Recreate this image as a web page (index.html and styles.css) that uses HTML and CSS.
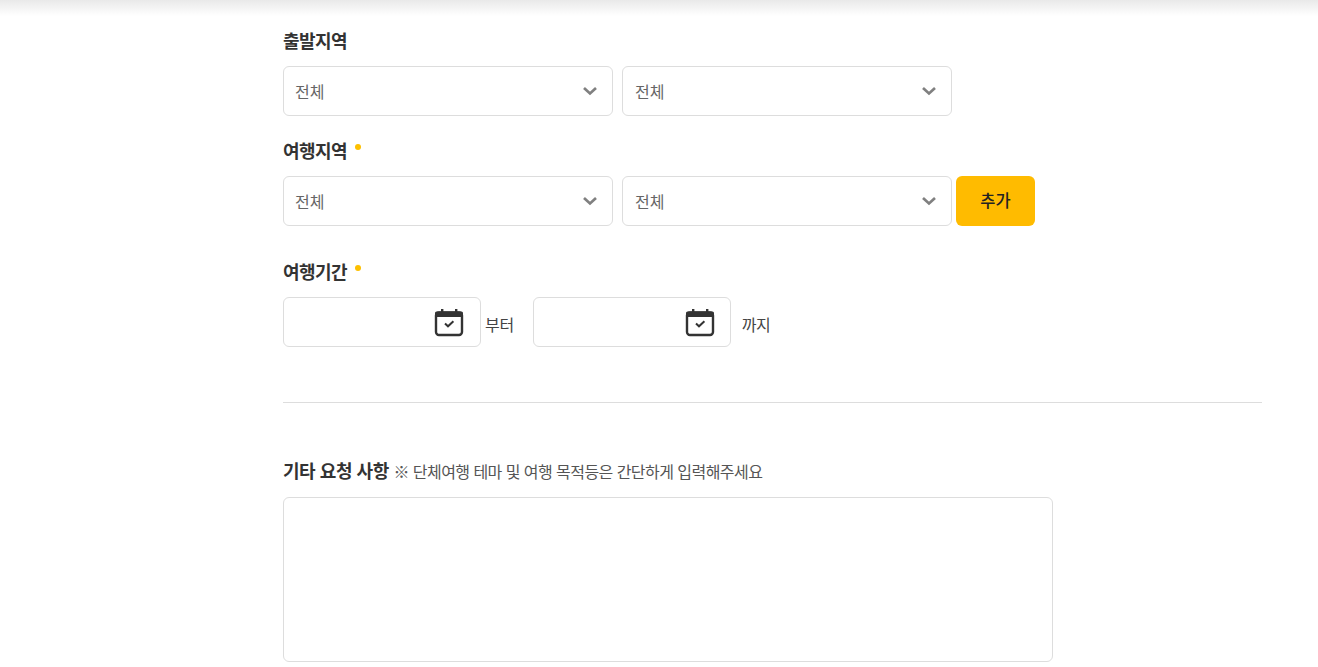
FILE: index.html
```html
<!DOCTYPE html>
<html lang="ko">
<head>
<meta charset="utf-8">
<title>단체여행 문의</title>
<link rel="stylesheet" href="styles.css">
</head>
<body>
<div class="top-shadow"></div>
<main class="form">
  <div class="label label-first">출발지역</div>
  <div class="row row-start">
    <div class="select"><span>전체</span><svg class="chev" width="16" height="10" viewBox="0 0 16 10"><path d="M2 2l6 5.5L14 2" fill="none" stroke="#808080" stroke-width="2.7"/></svg></div>
    <div class="select"><span>전체</span><svg class="chev" width="16" height="10" viewBox="0 0 16 10"><path d="M2 2l6 5.5L14 2" fill="none" stroke="#808080" stroke-width="2.7"/></svg></div>
  </div>
  <div class="label label-second">여행지역<i class="req"></i></div>
  <div class="row">
    <div class="select"><span>전체</span><svg class="chev" width="16" height="10" viewBox="0 0 16 10"><path d="M2 2l6 5.5L14 2" fill="none" stroke="#808080" stroke-width="2.7"/></svg></div>
    <div class="select"><span>전체</span><svg class="chev" width="16" height="10" viewBox="0 0 16 10"><path d="M2 2l6 5.5L14 2" fill="none" stroke="#808080" stroke-width="2.7"/></svg></div>
    <button class="add" type="button">추가</button>
  </div>
  <div class="label label-third">여행기간<i class="req"></i></div>
  <div class="dates">
    <div class="date"><svg width="30" height="30" viewBox="0 0 30 30"><rect x="2" y="4.5" width="26" height="22.5" rx="3" fill="none" stroke="#333" stroke-width="2.4"/><rect x="1" y="3.5" width="28" height="5.5" rx="1.5" fill="#333"/><rect x="7" y="1" width="2.4" height="4" fill="#333"/><rect x="21" y="1" width="2.4" height="4" fill="#333"/><path d="M11 15.5l3 2.8 5.4-5" fill="none" stroke="#333" stroke-width="2"/></svg></div>
    <span class="from">부터</span>
    <div class="date date-end"><svg width="30" height="30" viewBox="0 0 30 30"><rect x="2" y="4.5" width="26" height="22.5" rx="3" fill="none" stroke="#333" stroke-width="2.4"/><rect x="1" y="3.5" width="28" height="5.5" rx="1.5" fill="#333"/><rect x="7" y="1" width="2.4" height="4" fill="#333"/><rect x="21" y="1" width="2.4" height="4" fill="#333"/><path d="M11 15.5l3 2.8 5.4-5" fill="none" stroke="#333" stroke-width="2"/></svg></div>
    <span class="to">까지</span>
  </div>
  <hr class="rule">
  <div class="label label-etc">기타 요청 사항 <small>※ 단체여행 테마 및 여행 목적등은 간단하게 입력해주세요</small></div>
  <textarea class="memo"></textarea>
</main>
</body>
</html>
```
FILE: styles.css
```css
* { box-sizing: border-box; }
html, body { margin: 0; height: 667px; overflow: hidden; background: #fff; }
body { font-family: "Noto Sans CJK KR", "Noto Sans", sans-serif; color: #333; position: relative; }
.top-shadow { position: absolute; top: 0; left: 0; right: 0; height: 16px; background: linear-gradient(#e9e9e9, #fff); }
.form { position: relative; padding: 0 56px 0 283px; }
.label { font-size: 18px; font-weight: 700; line-height: 22px; letter-spacing: -0.6px; color: #333; }
.label-first { padding-top: 29px; height: 52px; }
.label-second { margin-top: 23px; }
.label-third { margin-top: 34px; }
.label-etc { margin-top: 56px; letter-spacing: -0.45px; }
.label small { font-size: 16px; font-weight: 400; letter-spacing: -0.55px; color: #555; }
.req { display: inline-block; width: 6px; height: 6px; border-radius: 50%; background: #fdc000; margin-left: 8px; vertical-align: 8px; }
.row { display: flex; margin-top: 15px; }
.row-start { margin-top: 14px; }
.select { width: 330px; height: 50px; border: 1px solid #ddd; border-radius: 6px; display: flex; align-items: center; justify-content: space-between; padding: 0 14px 0 11px; font-size: 16px; color: #666; background: #fff; }
.select + .select { margin-left: 9px; padding-left: 12px; }
.chev { display: block; }
.add { width: 79px; height: 50px; margin-left: 4px; border: 0; border-radius: 6px; background: #ffbb00; color: #222; font: 500 16.5px "Noto Sans CJK KR", sans-serif; padding: 0 0 3px; }
.dates { display: flex; align-items: center; margin-top: 15px; font-size: 16px; color: #444; }
.date { width: 198px; height: 50px; border: 1px solid #ddd; border-radius: 6px; display: flex; align-items: center; justify-content: flex-end; padding: 2px 16px 0 0; }
.date-end { padding-right: 15px; }
.from { margin: 4px 19px 0 4px; letter-spacing: -0.3px; }
.to { margin: 4px 0 0 11px; letter-spacing: -0.6px; }
.rule { border: 0; border-top: 1px solid #ddd; margin: 55px 0 0; }
.memo { display: block; width: 770px; height: 165px; margin-top: 15px; border: 1px solid #ddd; border-radius: 6px; resize: none; background: #fff; }
```
